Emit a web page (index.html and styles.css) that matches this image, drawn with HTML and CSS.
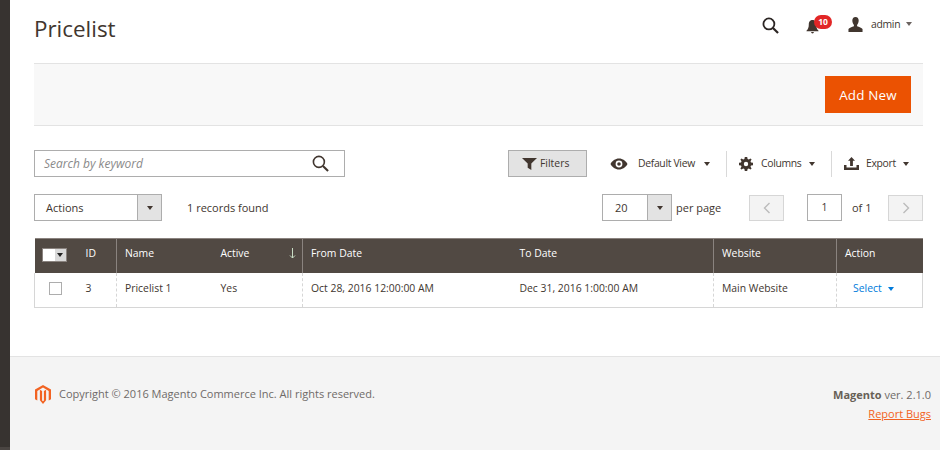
FILE: index.html
```html
<!DOCTYPE html>
<html lang="en">
<head>
<meta charset="utf-8">
<title>Pricelist</title>
<link rel="stylesheet" href="styles.css">
</head>
<body>
<div class="app">
  <aside class="sidebar"><div class="sidebar-end"></div></aside>
  <div class="page">
    <main class="content">
      <header class="topbar">
        <h1 class="title">Pricelist</h1>
        <div class="top-actions">
          <svg class="ic-search-top" viewBox="0 0 18 18"><circle cx="7.3" cy="7.3" r="5.8" fill="none" stroke="#2b2523" stroke-width="1.9"/><path d="M11.6 11.6 17 17" stroke="#2b2523" stroke-width="2.3"/></svg>
          <div class="bell">
            <svg class="ic-bell" viewBox="0 0 14 16"><path d="M7 1C4 1 3 3.400 3 6c0 3-1 5-2.500 6.500V13h13v-.5C12 11 11 9 11 6c0-2.600-1-5-4-5zM5.500 14h3a1.500 1.500 0 0 1-3 0z" fill="#41362f"/></svg>
            <span class="badge">10</span>
          </div>
          <div class="user">
            <svg class="ic-user" viewBox="0 0 16 16"><path d="M8 0c2.300 0 3.400 1.600 3.400 3.800 0 1.900-.8 3.700-1.700 4.600v1.500c2 .8 5.100 1.500 5.800 3V16H.5v-3.100c.7-1.500 3.800-2.200 5.800-3V8.400C5.400 7.500 4.600 5.700 4.600 3.800 4.600 1.600 5.700 0 8 0z" fill="#41362f"/></svg>
            <span class="user-name">admin</span>
            <span class="caret caret-user"></span>
          </div>
        </div>
      </header>

      <section class="page-actions">
        <button class="btn-primary" type="button">Add New</button>
      </section>

      <section class="grid-tools">
        <div class="search">
          <span class="search-text">Search by keyword</span>
          <svg class="ic-search" viewBox="0 0 18 18"><circle cx="7.300" cy="7.300" r="5.800" fill="none" stroke="#41362f" stroke-width="1.700"/><path d="M11.600 11.600 17 17" stroke="#41362f" stroke-width="2.200"/></svg>
        </div>
        <div class="tools-right">
          <button class="btn-filter" type="button">
            <svg class="ic-filter" viewBox="0 0 14 13" preserveAspectRatio="none"><path d="M0 0h14L8.700 6v7L5.300 10.500V6z" fill="#41362f"/></svg>
            Filters
          </button>
          <div class="tool tool-view">
            <svg class="ic-eye" viewBox="0 0 18 12"><path fill-rule="evenodd" d="M9 .5c3.800 0 6.800 2.400 8.500 5.500C15.800 9.100 12.800 11.500 9 11.500S2.200 9.100.5 6C2.200 2.900 5.200.5 9 .5zM9 2.600A3.400 3.400 0 1 0 9 9.400 3.400 3.400 0 0 0 9 2.600zM9 4.200A1.800 1.800 0 1 1 9 7.800 1.800 1.800 0 0 1 9 4.200z" fill="#41362f"/></svg>
            <span class="tool-label">Default View</span><span class="caret"></span>
          </div>
          <div class="tool tool-columns">
            <svg class="ic-gear" viewBox="0 0 14 14"><path fill-rule="evenodd" d="M5.800 0h2.400l.4 2 1.200.5L11.500 1.400 12.600 2.500 11.500 4.200l.5 1.200 2 .4v2.400l-2 .4-.5 1.200 1.100 1.700-1.100 1.100-1.700-1.100-1.200.5-.4 2H5.800l-.4-2-1.200-.5-1.700 1.100-1.100-1.100 1.100-1.700L2 8.600 0 8.200V5.800l2-.4.500-1.200L1.400 2.500 2.500 1.400l1.700 1.100L5.400 2zM7 4.800a2.200 2.200 0 1 0 0 4.400 2.200 2.200 0 0 0 0-4.400z" fill="#41362f"/></svg>
            <span class="tool-label">Columns</span><span class="caret"></span>
          </div>
          <div class="tool tool-export">
            <svg class="ic-export" viewBox="0 0 15 13"><path d="M7.500 0 11 3.800H8.900V9H6.100V3.800H4zM0 8h2.500v2.600h10V8H15v5H0z" fill="#41362f"/></svg>
            <span class="tool-label">Export</span><span class="caret"></span>
          </div>
        </div>
      </section>

      <section class="grid-pager">
        <div class="select select-actions">
          <span class="select-value">Actions</span>
          <span class="select-btn"><span class="caret caret-small"></span></span>
        </div>
        <span class="records">1 records found</span>
        <div class="pager">
          <div class="select select-size">
            <span class="select-value">20</span>
            <span class="select-btn"><span class="caret caret-small"></span></span>
          </div>
          <span class="per-page">per page</span>
          <span class="page-btn page-prev"><svg class="ic-chev" viewBox="0 0 8 12"><path d="M6.500 1 1.500 6l5 5" fill="none" stroke="#bbb" stroke-width="1.400"/></svg></span>
          <span class="page-input">1</span>
          <span class="page-of">of 1</span>
          <span class="page-btn"><svg class="ic-chev" viewBox="0 0 8 12"><path d="M1.500 1l5 5-5 5" fill="none" stroke="#bbb" stroke-width="1.400"/></svg></span>
        </div>
      </section>

      <table class="grid">
        <colgroup>
          <col class="c-check"><col class="c-id"><col class="c-name"><col class="c-active"><col class="c-from"><col class="c-to"><col class="c-site"><col class="c-action">
        </colgroup>
        <thead>
          <tr>
            <th class="cell-check"><span class="mass"><span class="mass-box"></span><span class="mass-btn"><span class="caret caret-tiny"></span></span></span></th>
            <th class="cell-id">ID</th>
            <th class="sep">Name</th>
            <th class="cell-sort">Active<svg class="sort-arrow" viewBox="0 0 7 11"><path d="M3.500 0v10M1 7.500 3.500 10 6 7.500" fill="none" stroke="#c8dcc4" stroke-width="1"/></svg></th>
            <th class="sep">From Date</th>
            <th>To Date</th>
            <th class="sep">Website</th>
            <th class="sep">Action</th>
          </tr>
        </thead>
        <tbody>
          <tr>
            <td class="cell-check"><span class="checkbox"></span></td>
            <td class="cell-id">3</td>
            <td class="sep">Pricelist 1</td>
            <td>Yes</td>
            <td class="sep">Oct 28, 2016 12:00:00 AM</td>
            <td>Dec 31, 2016 1:00:00 AM</td>
            <td class="sep">Main Website</td>
            <td class="sep cell-select"><span class="select-link">Select</span><span class="caret caret-blue"></span></td>
          </tr>
        </tbody>
      </table>
    </main>

    <footer class="footer">
      <div class="copyright">
        <svg class="logo" viewBox="0 0 16 19"><path d="M8 0 16 4.600V14.300L13.700 15.600V5.900L8 2.600 2.300 5.900V15.600L0 14.300V4.600z" fill="#f26322"/><path d="M8.900 6.100 11.100 4.800V15.200L8 19 4.900 15.200V4.800L7.100 6.100V15.600L8 16.200 8.900 15.600z" fill="#f26322"/></svg>
        <span>Copyright © 2016 Magento Commerce Inc. All rights reserved.</span>
      </div>
      <div class="version">
        <div><strong>Magento</strong> ver. 2.1.0</div>
        <a class="bugs" href="#">Report Bugs</a>
      </div>
    </footer>
  </div>
</div>
</body>
</html>
```
FILE: styles.css
```css
* { box-sizing: border-box; }
html, body { margin: 0; height: 100%; }
body {
  font-family: "Open Sans", sans-serif;
  font-size: 11px;
  color: #41362f;
  background: #fff;
  overflow: hidden;
}
.app { display: flex; height: 450px; }
.sidebar {
  width: 10px;
  flex: none;
  background: #373330;
  display: flex;
  flex-direction: column;
  justify-content: flex-end;
}
.sidebar-end { height: 3px; background: #4a4542; }
.page { flex: 1; min-width: 0; display: flex; flex-direction: column; }
.content { flex: 1; padding: 0 17px 0 24px; }

.topbar { height: 63px; display: flex; align-items: flex-start; justify-content: space-between; }
.title { margin: 13px 0 0; font-size: 22.4px; line-height: 31px; font-weight: 400; color: #41362f; }
.top-actions { display: flex; align-items: center; margin-top: 14px; height: 20px; padding-right: 11px; }
.ic-search-top { width: 17px; height: 17px; display: block; margin-top: 3px; }
.bell { position: relative; width: 26px; height: 20px; margin-left: 27px; }
.ic-bell { position: absolute; left: 0; top: 5px; width: 13px; height: 15px; }
.badge {
  position: absolute;
  left: 8px;
  top: 1px;
  width: 18px;
  height: 14px;
  border-radius: 7px;
  background: #e22626;
  color: #fff;
  font-size: 8.5px;
  font-weight: 700;
  line-height: 14px;
  text-align: center;
}
.user { display: flex; align-items: center; margin-left: 16px; }
.ic-user { width: 15px; height: 15px; display: block; }
.user-name { margin-left: 8px; width: 29px; font-size: 10.4px; letter-spacing: -.3px; color: #41362f; }
.caret {
  display: inline-block;
  width: 0;
  height: 0;
  border-left: 3.500px solid transparent;
  border-right: 3.500px solid transparent;
  border-top: 4px solid #41362f;
}
.caret-user { margin-left: 6px; border-top-color: #6b6360; }

.page-actions {
  height: 63px;
  background: #f8f8f8;
  border-top: 1px solid #e3e3e3;
  border-bottom: 1px solid #e3e3e3;
  display: flex;
  justify-content: flex-end;
  align-items: flex-start;
  padding: 12px 12px 0 0;
}
.btn-primary {
  width: 86px;
  height: 37px;
  border: 0;
  padding: 0;
  background: #eb5202;
  color: #fff;
  font-family: inherit;
  font-size: 13.4px;
  letter-spacing: .2px;
}

.grid-tools { display: flex; justify-content: space-between; margin-top: 24px; height: 27px; }
.search {
  width: 311px;
  height: 27px;
  border: 1px solid #adadad;
  display: flex;
  align-items: center;
  justify-content: space-between;
  padding: 0 15px 0 9px;
}
.search-text { font-style: italic; font-size: 12px; color: #8a8a8a; }
.ic-search { width: 17px; height: 17px; display: block; }
.tools-right { display: flex; align-items: center; height: 27px; padding-right: 13px; }
.btn-filter {
  width: 79px;
  height: 27px;
  background: #e3e3e3;
  border: 1px solid #adadad;
  padding: 0 0 2px 13px;
  display: flex;
  align-items: center;
  gap: 3px;
  font-family: inherit;
  font-size: 10.4px;
  color: #41362f;
}
.ic-filter { width: 15px; height: 12px; display: block; margin-top: 2px; }
.tool { display: flex; align-items: center; font-size: 10.4px; letter-spacing: -.32px; height: 26px; }
.tool-label { padding-bottom: 1px; }
.tool-view { margin-left: 23px; width: 116px; }
.ic-eye { width: 18px; height: 12px; display: block; margin-right: 10px; }
.tool-view .caret { margin-left: 9px; }
.tool-columns { width: 105px; border-left: 1px solid #d9d9d9; padding-left: 12px; }
.ic-gear { width: 14px; height: 14px; display: block; margin-right: 8px; }
.tool-columns .caret { margin-left: 7px; }
.tool-export { width: 79px; border-left: 1px solid #d9d9d9; padding-left: 12px; }
.ic-export { width: 15px; height: 13px; display: block; margin-right: 7px; }
.tool-export .caret { margin-left: 7px; }

.grid-pager { display: flex; align-items: center; height: 27px; margin-top: 17px; }
.select {
  display: flex;
  height: 27px;
  border: 1px solid #adadad;
  font-size: 11px;
}
.select-actions { width: 128px; }
.select-size { width: 70px; }
.select-value { flex: 1; padding-left: 11px; line-height: 26px; }
.select-size .select-value { padding-left: 12px; }
.select-btn {
  width: 24px;
  background: #e3e3e3;
  border-left: 1px solid #adadad;
  display: flex;
  align-items: center;
  justify-content: center;
}
.caret-small { border-left-width: 3px; border-right-width: 3px; border-top-width: 4px; }
.records { margin-left: 25px; font-size: 11px; }
.pager { margin-left: auto; display: flex; align-items: center; font-size: 11px; }
.per-page { margin-left: 4px; width: 73px; }
.page-btn {
  width: 35px;
  height: 26px;
  background: #f3f3f3;
  border: 1px solid #d6d6d6;
  display: flex;
  align-items: center;
  justify-content: center;
}
.ic-chev { width: 8px; height: 12px; display: block; }
.page-prev { margin-right: 23px; }
.page-input {
  width: 35px;
  height: 27px;
  border: 1px solid #adadad;
  text-align: center;
  line-height: 25px;
  font-size: 10.4px;
}
.page-of { width: 46px; padding-left: 10px; }

.grid {
  width: 888px;
  margin-top: 17px;
  border-collapse: collapse;
  table-layout: fixed;
  font-size: 10.4px;
}
.c-check { width: 42px; }
.c-id { width: 40px; }
.c-name { width: 96px; }
.c-active { width: 90px; }
.c-from { width: 209px; }
.c-to { width: 202px; }
.c-site { width: 123px; }
.c-action { width: 86px; }
.grid th {
  height: 34px;
  background: #514943;
  color: #fff;
  font-weight: 400;
  text-align: left;
  padding: 0 0 5px 8px;
  border-top: 1px solid #8a837f;
}
.grid th.sep { border-left: 1px solid #8a837f; }
.grid td {
  height: 35px;
  padding: 0 0 4px 8px;
  border-bottom: 1px solid #d6d6d6;
}
.grid td.sep { border-left: 1px dashed #d6d6d6; }
.grid td:first-child { border-left: 1px solid #d6d6d6; }
.grid td:last-child { border-right: 1px solid #d6d6d6; }
.grid th.cell-id, .grid td.cell-id { padding-left: 9px; }
.grid th.cell-check { padding-left: 7px; padding-bottom: 2px; }
.grid td.cell-check { padding-left: 14px; padding-bottom: 3px; }
.cell-sort { position: relative; }
.sort-arrow { position: absolute; right: 6px; top: 9px; width: 7px; height: 11px; display: block; }
.mass { display: flex; width: 25px; height: 14px; border: 1px solid #8a837f; background: #fff; }
.mass-box { width: 12px; background: #fff; }
.mass-btn { flex: 1; background: #d9d9d9; display: flex; align-items: center; justify-content: center; }
.caret-tiny { border-left-width: 3px; border-right-width: 3px; border-top-width: 4px; border-top-color: #222; }
.checkbox { display: block; width: 13px; height: 13px; border: 1px solid #adadad; background: #fff; }
.cell-select { padding-left: 16px !important; }
.select-link { color: #007bdb; }
.caret-blue { margin-left: 6px; border-top-color: #007bdb; vertical-align: 1px; }

.footer {
  height: 94px;
  flex: none;
  background: #f4f4f4;
  border-top: 1px solid #e3e3e3;
  padding: 27px 9px 0 24px;
  display: flex;
  justify-content: space-between;
  align-items: flex-start;
  font-size: 11px;
  color: #6f6a68;
}
.copyright { display: flex; align-items: center; height: 19px; }
.logo { width: 16px; height: 19px; display: block; margin: 1px 8px 0 1px; }
.version { text-align: right; line-height: 19px; margin-top: 1px; }
.version strong { font-weight: 700; color: #676056; }
.bugs { color: #f26322; display: block; }
```
